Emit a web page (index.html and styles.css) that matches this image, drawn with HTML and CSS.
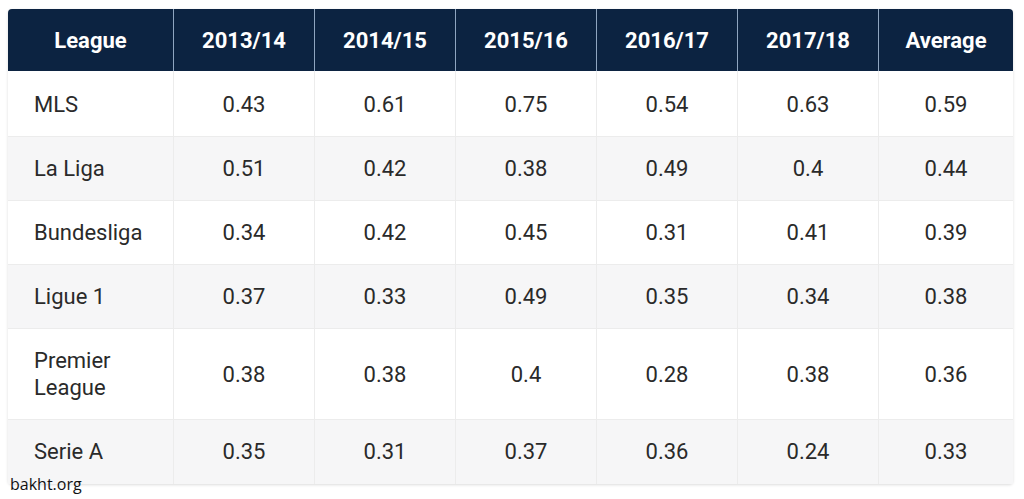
FILE: index.html
```html
<!DOCTYPE html>
<html>
<head>
<meta charset="utf-8">
<link rel="stylesheet" href="styles.css">
</head>
<body>
<div class="wrap">
<table class="stats">
<colgroup>
<col class="c-league"><col class="c-num"><col class="c-num"><col class="c-num"><col class="c-num"><col class="c-num"><col class="c-avg">
</colgroup>
<thead>
<tr><th>League</th><th>2013/14</th><th>2014/15</th><th>2015/16</th><th>2016/17</th><th>2017/18</th><th>Average</th></tr>
</thead>
<tbody>
<tr><td>MLS</td><td>0.43</td><td>0.61</td><td>0.75</td><td>0.54</td><td>0.63</td><td>0.59</td></tr>
<tr><td>La Liga</td><td>0.51</td><td>0.42</td><td>0.38</td><td>0.49</td><td>0.4</td><td>0.44</td></tr>
<tr><td>Bundesliga</td><td>0.34</td><td>0.42</td><td>0.45</td><td>0.31</td><td>0.41</td><td>0.39</td></tr>
<tr><td>Ligue 1</td><td>0.37</td><td>0.33</td><td>0.49</td><td>0.35</td><td>0.34</td><td>0.38</td></tr>
<tr><td>Premier<br>League</td><td>0.38</td><td>0.38</td><td>0.4</td><td>0.28</td><td>0.38</td><td>0.36</td></tr>
<tr><td>Serie A</td><td>0.35</td><td>0.31</td><td>0.37</td><td>0.36</td><td>0.24</td><td>0.33</td></tr>
</tbody>
</table>
<span class="mark">bakht.org</span>
</div>
</body>
</html>
```
FILE: styles.css
```css
html, body {
  margin: 0;
  padding: 0;
  background: #fff;
}
html {
  height: 100%;
}
body {
  box-sizing: border-box;
  min-height: 100%;
  padding: 9px 11px 0 8px;
  font-family: Roboto, "Liberation Sans", sans-serif;
}
.wrap {
  position: relative;
}
.stats {
  width: 1005px;
  table-layout: fixed;
  border-collapse: separate;
  border-spacing: 0;
  border-radius: 4px;
  box-shadow: 0 1px 3px rgba(0,0,0,0.14);
  font-size: 22px;
  line-height: 27px;
}
.c-league { width: 165px; }
.c-num { width: 141px; }
.c-avg { width: 135px; }
.stats th {
  background: #0c2341;
  color: #fff;
  font-weight: 700;
  text-align: center;
  padding: 18px 2px 17px;
  border-left: 1px solid #8fa5c0;
}
.stats th:first-child {
  border-left: none;
  border-top-left-radius: 4px;
}
.stats th:last-child {
  border-top-right-radius: 4px;
}
.stats td {
  color: #2a2a2a;
  text-align: center;
  padding: 18px 2px;
  border-left: 1px solid #ececec;
  border-top: 1px solid #ececec;
}
.stats tbody tr:first-child td {
  border-top: none;
  padding-top: 20px;
}
.stats tbody tr:last-child td {
  padding-bottom: 19px;
}
.stats td:first-child {
  text-align: left;
  padding-left: 26px;
  border-left: none;
}
.stats tbody tr:nth-child(even) td {
  background: #f6f6f7;
}
.stats tbody tr:nth-child(odd) td {
  background: #fff;
}
.mark {
  position: absolute;
  left: 2px;
  top: 464px;
  font-family: "Open Sans", "DejaVu Sans", sans-serif;
  font-size: 16px;
  line-height: 22px;
  color: #111;
}
```
